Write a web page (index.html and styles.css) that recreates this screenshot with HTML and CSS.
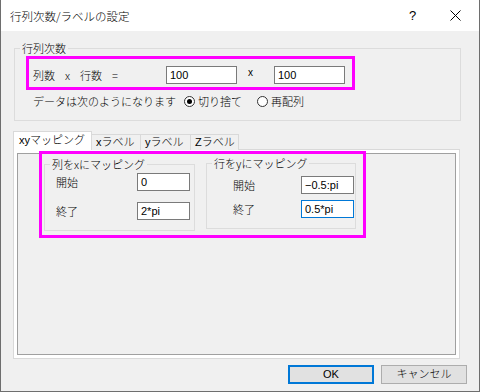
FILE: index.html
```html
<!DOCTYPE html>
<html lang="ja">
<head>
<meta charset="utf-8">
<title>行列次数/ラベルの設定</title>
<link rel="stylesheet" href="styles.css">
</head>
<body>
<div class="window">
  <div class="titlebar">
    <span class="title">行列次数/ラベルの設定</span>
    <span class="help">?</span>
    <span class="close"><svg width="11" height="11" viewBox="0 0 11 11"><path d="M0.5 0.5 L10.5 10.5 M10.5 0.5 L0.5 10.5" stroke="#000" stroke-width="1" fill="none"/></svg></span>
  </div>
  <div class="content">
    <fieldset class="group dims">
      <legend>行列次数</legend>
      <div class="mark mark-dims">
        <span class="dims-label"><span class="dl">列数</span><span class="dl">x</span><span class="dl">行数</span><span>=</span></span>
        <div class="field dim-field">100</div>
        <span class="times">x</span>
        <div class="field dim-field">100</div>
      </div>
      <div class="radio-row">
        <span class="radio-text">データは次のようになります</span>
        <span class="radio checked"></span><span class="radio-label">切り捨て</span>
        <span class="radio second"></span><span class="radio-label">再配列</span>
      </div>
    </fieldset>

    <div class="tabs">
      <div class="tab active">xyマッピング</div>
      <div class="tab">xラベル</div>
      <div class="tab">yラベル</div>
      <div class="tab">Zラベル</div>
    </div>
    <div class="panel">
      <div class="inner">
        <div class="mark mark-map">
          <fieldset class="group map map-x">
            <legend>列をxにマッピング</legend>
            <div class="map-grid">
              <span class="map-label">開始</span><div class="field map-field">0</div>
              <span class="map-label">終了</span><div class="field map-field">2*pi</div>
            </div>
          </fieldset>
          <fieldset class="group map map-y">
            <legend>行をyにマッピング</legend>
            <div class="map-grid">
              <span class="map-label">開始</span><div class="field map-field">−0.5:pi</div>
              <span class="map-label">終了</span><div class="field map-field focused">0.5*pi</div>
            </div>
          </fieldset>
        </div>
      </div>
    </div>

    <div class="buttons">
      <div class="btn default">OK</div>
      <div class="btn">キャンセル</div>
    </div>
  </div>
</div>
</body>
</html>
```

FILE: styles.css
```css
html, body {
  margin: 0;
  padding: 0;
  background: #ffffff;
}
body {
  font-family: "Liberation Sans", "Noto Sans CJK JP", sans-serif;
  font-size: 11px;
  font-weight: 300;
  color: #000;
}
.window {
  width: 480px;
  height: 392px;
  box-sizing: border-box;
  border: 1px solid #6e6e6e;
  border-top: none;
  background: #f0f0f0;
  display: flex;
  flex-direction: column;
}
.titlebar {
  height: 31px;
  background: #fff;
  display: flex;
  align-items: center;
  flex: none;
}
.title {
  margin-left: 9px;
  font-family: "Noto Sans CJK JP", sans-serif;
  font-size: 11.5px;
  line-height: 14px;
  flex: 1;
}
.help {
  font-family: "Liberation Sans", sans-serif;
  font-size: 13px;
  width: 12px;
  margin-right: 29px;
}
.close {
  display: flex;
  margin-right: 18px;
}
.content {
  flex: 1;
  display: flex;
  flex-direction: column;
}
.group {
  border: 1px solid #dcdcdc;
  margin: 0;
  min-width: 0;
}
.group legend {
  padding: 0 2px;
  line-height: 14px;
  font-family: "Noto Sans CJK JP", sans-serif;
}
.dims {
  margin: 10px 18px 0 13px;
  padding: 0 0 11px 11px;
}
.dims legend {
  margin-left: -6px;
}
.mark {
  border: 3px solid #ff00ff;
  box-sizing: border-box;
}
.mark-dims {
  width: 329px;
  height: 34px;
  margin-top: 1px;
  display: flex;
  align-items: center;
  padding: 4px 0 0 4px;
}
.dims-label {
  width: 133px;
  display: flex;
  font-family: "Noto Sans CJK JP", sans-serif;
}
.dl {
  margin-right: 10px;
}
.field {
  box-sizing: border-box;
  height: 18px;
  background: #fff;
  border: 1px solid #7a7a7a;
  padding: 0 3px;
  line-height: 16px;
  font-size: 11px;
  white-space: nowrap;
}
.dim-field {
  width: 71px;
}
.times {
  width: 37px;
  box-sizing: border-box;
  padding-left: 11px;
  font-size: 10px;
  margin-top: -6px;
}
.radio-row {
  display: flex;
  align-items: center;
  height: 16px;
  margin-top: 3px;
  padding-left: 7px;
  font-family: "Noto Sans CJK JP", sans-serif;
}
.radio-text {
  width: 151px;
}
.radio {
  width: 11px;
  height: 11px;
  box-sizing: border-box;
  border: 1px solid #333;
  border-radius: 50%;
  background: #fff;
  margin-right: 3px;
  position: relative;
  flex: none;
}
.radio.checked::after {
  content: "";
  position: absolute;
  left: 2px;
  top: 2px;
  width: 5px;
  height: 5px;
  border-radius: 50%;
  background: #000;
}
.radio-label {
  width: 59px;
}
.tabs {
  display: flex;
  align-items: flex-end;
  margin: 10px 0 -1px 12px;
  height: 19px;
  position: relative;
  z-index: 1;
}
.tab {
  box-sizing: border-box;
  height: 16px;
  border: 1px solid #d9d9d9;
  border-bottom: none;
  background: #f0f0f0;
  margin-right: -1px;
  padding: 0 4px;
  line-height: 15px;
  white-space: nowrap;
}
.tab.active {
  height: 19px;
  width: 79px;
  background: #fff;
  padding-left: 5px;
  line-height: 17px;
}
.tab:nth-child(2) { width: 50px; }
.tab:nth-child(3) { width: 51px; }
.tab:nth-child(4) { width: 49px; }
.panel {
  margin-left: 12px;
  width: 447px;
  height: 210px;
  box-sizing: border-box;
  border: 1px solid #d9d9d9;
  background: #fff;
  padding: 3px;
}
.inner {
  height: 202px;
  box-sizing: border-box;
  border: 1px solid #a0a0a0;
  background: #f0f0f0;
}
.mark-map {
  width: 327px;
  height: 87px;
  margin: -3px 0 0 21px;
  display: flex;
  align-items: flex-start;
  padding-left: 2px;
}
.map {
  padding: 0;
}
.map legend {
  margin-left: 5px;
}
.map-x {
  width: 151px;
  height: 74px;
  margin-top: 3px;
  box-sizing: border-box;
}
.map-y {
  width: 150px;
  height: 73px;
  margin-top: 2px;
  margin-left: 11px;
  box-sizing: border-box;
}
.map-grid {
  display: grid;
  grid-template-columns: auto 53px;
  row-gap: 11px;
  align-items: center;
}
.map-x .map-grid {
  grid-template-columns: 81px 53px;
  padding-left: 11px;
  margin-top: 2px;
}
.map-y .map-grid {
  grid-template-columns: 68px 53px;
  padding-left: 26px;
  margin-top: 6px;
  row-gap: 6px;
}
.map-label {
  font-family: "Noto Sans CJK JP", sans-serif;
}
.map-field.focused {
  border-color: #0078d7;
}
.buttons {
  display: flex;
  justify-content: flex-end;
  gap: 7px;
  margin: 6px 12px 0 0;
}
.btn {
  box-sizing: border-box;
  width: 86px;
  height: 19px;
  border: 1px solid #adadad;
  background: #e1e1e1;
  text-align: center;
  line-height: 17px;
}
.btn.default {
  border: 2px solid #0078d7;
  line-height: 15px;
}
```
